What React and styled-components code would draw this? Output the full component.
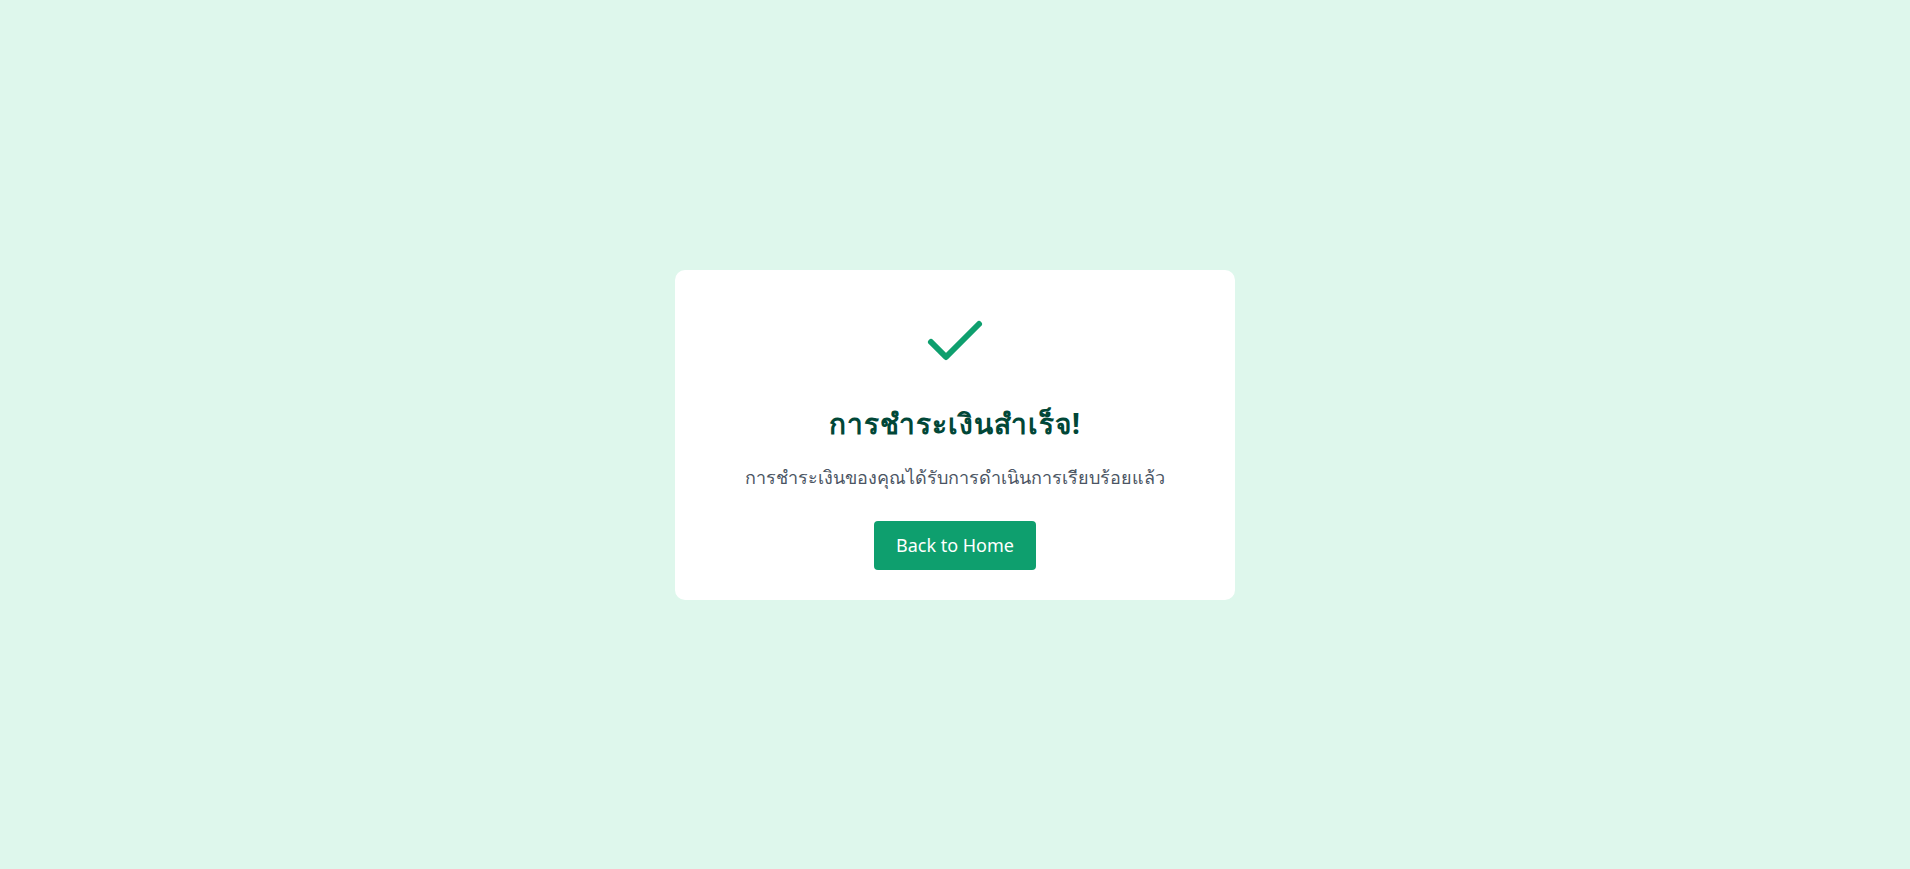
import React from "react"
import styled, { createGlobalStyle } from "styled-components"
import { Check } from "lucide-react"

const GlobalStyle = createGlobalStyle`
    html, body, #root {
        margin: 0;
        padding: 0;
        height: 100%;
    }
    body {
        background-color: #DEF7EC;
        font-family: "Noto Sans", "Open Sans", sans-serif;
    }
`;

const Page = styled.div`
    min-height: 100vh;
    display: flex;
    align-items: center;
    justify-content: center;
`;

const Card = styled.div`
    width: 560px;
    box-sizing: border-box;
    padding: 36px 32px 30px;
    background-color: #FFF;
    border-radius: 10px;
    display: flex;
    flex-direction: column;
    align-items: center;
    text-align: center;
`;

const IconWrap = styled.div`
    color: #0E9F6E;
    display: flex;
    margin-bottom: 29px;
`;

const Title = styled.h1`
    margin: 0 0 26px;
    font-size: 28px;
    line-height: 32px;
    font-weight: 700;
    letter-spacing: 1px;
    color: #014737;
`;

const Message = styled.p`
    margin: 0 0 32px;
    font-size: 18px;
    line-height: 24px;
    color: #4B5563;
`;

const HomeButton = styled.button`
    border: none;
    border-radius: 4px;
    background-color: #0E9F6E;
    color: #FFF;
    font-family: inherit;
    font-size: 18px;
    line-height: 27px;
    padding: 11px 22px;
    cursor: pointer;
    transition: background-color .2s ease-in;
    &:hover {
        background-color: #057A55;
    }
`;

function App() {
    return (
        <Page>
            <GlobalStyle />
            <Card>
                <IconWrap><Check size={72} strokeWidth={2} /></IconWrap>
                <Title>การชำระเงินสำเร็จ!</Title>
                <Message>การชำระเงินของคุณได้รับการดำเนินการเรียบร้อยแล้ว</Message>
                <HomeButton>Back to Home</HomeButton>
            </Card>
        </Page>
    );
}

export default App;
